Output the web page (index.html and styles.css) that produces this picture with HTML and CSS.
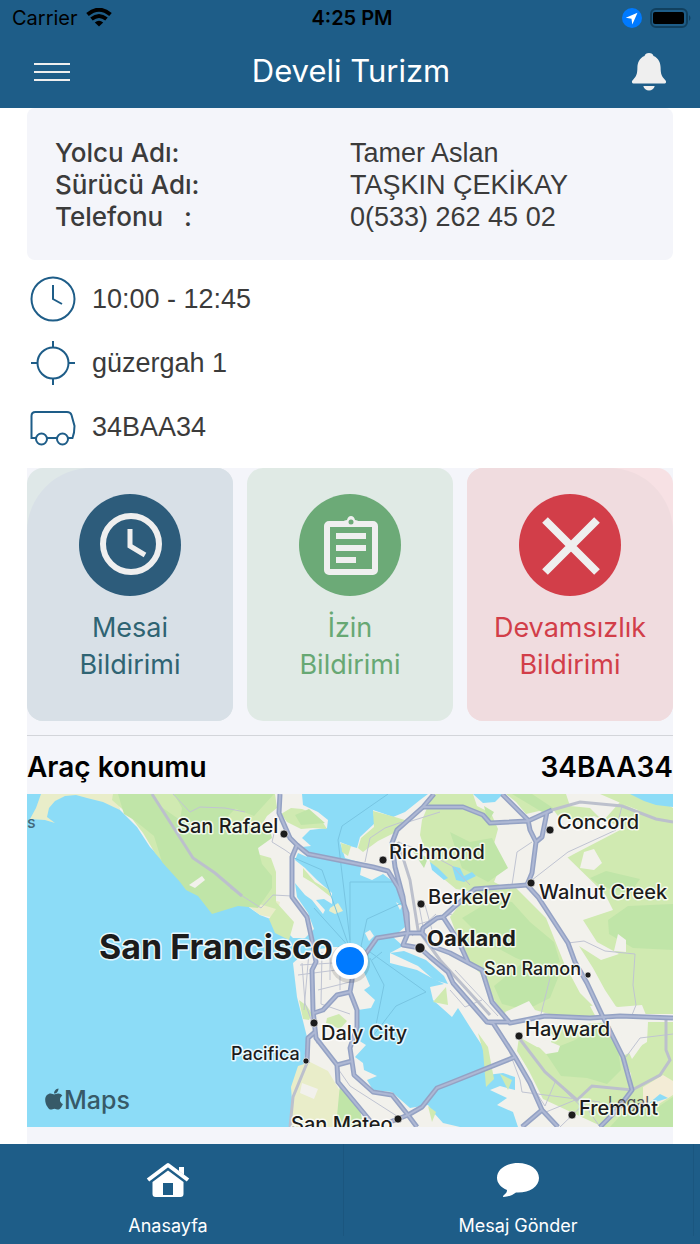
FILE: index.html
```html
<!DOCTYPE html>
<html lang="tr">
<head>
	<meta charset="UTF-8">
	<meta name="viewport" content="width=device-width, initial-scale=1">
	<title>Develi Turizm</title>
	<link rel="stylesheet" href="styles.css">
</head>
<body>
	<header class="top">
		<div class="status-bar">
			<div class="carrier">
				<span>Carrier</span>
				<svg width="26" height="20" viewBox="0 0 26 20">
					<path d="M1.500 6.500Q13-3 24.500 6.500" fill="none" stroke="#000" stroke-width="4"/>
					<path d="M5.500 11Q13 5 20.500 11" fill="none" stroke="#000" stroke-width="4"/>
					<path d="M8.800 14.500Q13 11 17.200 14.500L13 18.500z"/>
				</svg>
			</div>
			<div class="clock">4:25 PM</div>
			<div class="battery">
				<svg width="20" height="20" viewBox="0 0 20 20">
					<circle cx="10" cy="10" r="10" fill="#007aff"/>
					<path d="M15.500 4.800L3.800 9.800l5.700.9.800 5.700z" fill="#fff"/>
				</svg>
				<svg width="42" height="20" viewBox="0 0 42 20">
					<rect x="1" y="1" width="36" height="18" rx="5" fill="none" stroke="#11405f" stroke-width="2"/>
					<rect x="3" y="4" width="31" height="12" rx="2"/>
					<path d="M39 7q3 3 0 6z" fill="#11405f"/>
				</svg>
			</div>
		</div>
		<div class="nav-bar">
			<button type="button" class="icon-button" aria-label="Menü">
				<svg width="38" height="20" viewBox="0 0 38 20">
					<path d="M1 2h36M1 10h36M1 18h36" stroke="#efefef" stroke-width="2"/>
				</svg>
			</button>
			<h1>Develi Turizm</h1>
			<button type="button" class="icon-button" aria-label="Bildirimler">
				<svg width="36" height="40" viewBox="0 0 36 40">
					<path d="M18 1c-2.500 0-4 1.300-4.500 3C8.500 6 6.500 10.500 6.400 15.500 6.300 22 5.500 24 2.500 27.200 1 28.800.800 29.300 1 30.200c.2 1 .9 1.400 2 1.400h30c1.100 0 1.800-.4 2-1.400.2-.9 0-1.400-1.500-3-3-3.200-3.800-5.200-3.900-11.700C29.500 10.500 27.500 6 22.500 4 22 2.300 20.500 1 18 1z" fill="#efefef"/>
					<path d="M12.300 34h11.400c-.7 2.800-3 4.500-5.700 4.500S13 36.800 12.300 34z" fill="#efefef"/>
				</svg>
			</button>
		</div>
	</header>

	<main>
		<dl class="passenger">
			<dt>Yolcu Adı:</dt>
			<dd>Tamer Aslan</dd>
			<dt>Sürücü Adı:</dt>
			<dd>TAŞKIN ÇEKİKAY</dd>
			<dt>Telefonu &nbsp; :</dt>
			<dd>0(533) 262 45 02</dd>
		</dl>

		<ul class="trip">
			<li>
				<svg class="trip-icon" viewBox="0 0 46 46">
					<circle cx="23" cy="23" r="21.500"/>
					<path d="M23 9v14l9 5"/>
				</svg>
				10:00 - 12:45
			</li>
			<li>
				<svg class="trip-icon" viewBox="0 0 46 46">
					<circle cx="23" cy="23" r="15.500"/>
					<path d="M23 1v7M23 38v7M1 23h7M38 23h7"/>
				</svg>
				güzergah 1
			</li>
			<li>
				<svg class="trip-icon" viewBox="0 0 46 46">
					<path d="M6 34H1.500V12q0-4 4-4H37q3.500 0 4.500 3l3 11q0 7-2 12h-4.500M17 34h10"/>
					<circle cx="11.500" cy="35" r="5.500"/>
					<circle cx="32.500" cy="35" r="5.500"/>
				</svg>
				34BAA34
			</li>
		</ul>

		<section class="panel">
			<div class="actions">
				<button type="button" class="action overtime">
					<svg viewBox="0 0 102 102">
						<circle cx="51" cy="51" r="51" fill="#2d5c7b"/>
						<circle cx="52" cy="50" r="28" fill="none" stroke="#efefef" stroke-width="6"/>
						<path d="M51 35v17l15 9" fill="none" stroke="#efefef" stroke-width="5"/>
					</svg>
					<span>Mesai<br>Bildirimi</span>
				</button>
				<button type="button" class="action leave">
					<svg viewBox="0 0 102 102">
						<circle cx="51" cy="51" r="51" fill="#6caa77"/>
						<rect x="28" y="30" width="48" height="48" rx="2" fill="none" stroke="#efefef" stroke-width="6"/>
						<path d="M42 32q1-6 6-6 1-4 4-4t4 4q5 0 6 6z" fill="#efefef"/>
						<circle cx="52" cy="28" r="2.500" fill="#6caa77"/>
						<path d="M37 42h30M37 54h30M37 66h20" stroke="#efefef" stroke-width="6"/>
					</svg>
					<span>İzin<br>Bildirimi</span>
				</button>
				<button type="button" class="action absence">
					<svg viewBox="0 0 102 102">
						<circle cx="51" cy="51" r="51" fill="#d23e49"/>
						<path d="M26 26l52 52M78 26L26 78" stroke="#efefef" stroke-width="8"/>
					</svg>
					<span>Devamsızlık<br>Bildirimi</span>
				</button>
			</div>

			<h2 class="vehicle"><span>Araç konumu</span><span>34BAA34</span></h2>

			<svg class="map" viewBox="27 794 646 333">
				<!-- land -->
				<g class="land">
					<path d="M113 794L120 810 137 827 150 847 163 860 179 875 188 884 195 888 205 880 218 880 230 891 250 908 260 915 273 920 285 930 293 938 305 938 314 929 308 913 297 897 295 883 305 895 312 900 323 914 325 910 316 900 324 899 332 904 332 893 317 880 305 868 295 860 298 853 307 857 302 847 311 846 302 838 310 830 327 828 328 820 318 812 303 805 302 794z"/>
					<path d="M293 963L307 951 333 947 353 947 368 960 364 972 370 986 364 990 375 1000 371 1008 358 1010 358 1040 366 1045 355 1057 363 1063 364 1070 377 1076 367 1080 373 1090 392 1092 410 1108 428 1105 434 1113 443 1123 460 1127 290 1127 293 1100 292 1087 303 1070 307 1037 297 997z"/>
					<path d="M428 794L420 800 405 812 393 817 382 813 373 810 375 823 360 837 357 848 350 846 340 842 345 858 362 863 360 875 372 880 383 874 395 883 402 903 405 927 393 937 403 946 390 953 390 963 417 970 430 977 444 984 430 987 433 1000 452 1017 458 1008 470 1027 483 1047 487 1075 503 1073 515 1077 515 1090 500 1086 490 1090 507 1098 497 1105 513 1112 518 1127 673 1127 673 794z"/>
					<path d="M365 933l5-3 4 6-5 5zM396 902l6 4-2 4z"/>
				</g>
				<!-- beaches -->
				<g class="sand">
					<path d="M41 794L36 808 30 819 45 820 55 823 47 817 49 808 55 801 65 796 76 795 87 798 103 802 120 810 118 800 113 794z"/>
					<path d="M230 889l17 10 16-6 5 5 12 4-4 16-16-3-18-14zM298 1066l12-4 18 9 12 20 3 20-3 16h-50l2-26-1-14z"/>
					<path d="M330 908l8-5 5 8-8 3-6-3z"/>
				</g>
				<!-- parks and hills -->
				<g class="green">
					<path d="M113 794h162l2 14-10 8-6 10-12 10 8 18 14 4 5 14v30l18 20-5 18-14-7-6-14 7-10-20-6-10-6-12 6-8-8-12-6-7-4h-12l-7 2-6-6-15-14-12-14-12-20-13-17-18-16z"/>
					<path d="M302 809l10 4 10 8 5 8-14-1-12 1-14-7-6-8 10-6zM303 868l12 14 14 8 2 7-18-14-10-6zM341 843l10 3-3 10-6-4zM373 811l22 6 13 4-14 12-16 8-15 11-5-4 3-10 13-11zM299 1000l8 6 5 8-3 6-6-1zM327 1018l12-4 8 7-7 8-14-6zM433 1002l13-15 2 18z"/>
					<path d="M433 794h40l4 12 14 7 7 16-6 22 8 16-6 15 10 5-22 6-26-4-22-18-8-18-6-18 2-15z"/>
					<path d="M506 794h60l4 12 20 2 10 10-14 6-28-8-6-8-26 6-10-12zM600 794h50l23 14v10l-30-6-20-8z"/>
					<path d="M564 854l20-12 20-22 16-18 16 8 37 4v200h-52l-16-24-12-22-14-22 22 14 18-6-22-12-14-22 30-10-8-16z"/>
					<path d="M450 917l20-25 46-4 30 30 18 45 16 30 24 24h-60l-40-4-14-18-10-22-14-14z"/>
					<path d="M519 1037l18 10 12 2 4-14-14-7 70-6 14 36 8 28 42-12v53h-70l-60-28-14-28-12-20z"/>
					<path d="M648 1022h25v62l-40 12-2-22-8-18 8-4 16-10z"/>
					<path d="M478 1033l10 14 6 32-8 8-3-36zM500 1074l12 6-4 10zM428 1106l8 6-4 10z"/>
				</g>
				<g class="forest">
					<path d="M118 794h34l8 12 20 14 2-12-8-14h66l-4 14-12 12 14 12 30-10 4 16-14 10 4 16 10 12v12l-14 20-20-2-26 8-14-18-12-6-6-8-18-20-8-26-20-16-10-6z"/>
					<path d="M240 794h34l-20 22-20-8zM295 815l14-6 16 14-24 2zM340 1084l20 26 4 17h-28z"/>
					<path d="M450 832l20 10 22-4 16 30-20 14-26-14zM412 850l16 8-4 10zM484 806l10 6-6 10zM462 918l30-18 20 2 18 20 24 20 6 20-14 8-30-12-30-16zM494 986l32-26 36 8-12 30-24 12-24-6z"/>
					<path d="M608 920l20-14 45-2v46l-40-2-24-14zM590 878l16-7 34 8-10 14-28-6zM545 1052l30-12 22-14 20 16 4 28-14 14-20-6-26-2zM610 1127l24-26 18 10 21-14v30zM512 794h20l24 16-14 2z"/>
				</g>
				<!-- towns -->
				<g class="land">
					<path d="M505 1012l24-11 6 9 14 4-10 12-26 2zM590 1006l14-2 14 3 24-2 4 10-16 10 12 20-10 14-14-30-20-8zM536 1044l10-4 14 6-2 6-12 2zM302 1083l16 6-4 10-14-6zM189 885l6 3 10-8-3-4z"/>
					<path d="M584 852l10-3 8 14-8 7-14-2zM618 934l8 6v12l-12-1zM556 830l22-6 16-8 30 12-50 26-18 10z"/>
				</g>
				<path d="M643 1087l20-12 10 6v14l-22 14-8-6z" fill="#f3ecd6"/>
				<g class="water">
					<path d="M473 794h30l-8 8-12 1zM630 794l14 7 12 4 17 2v-13zM430 862l8 6 10 10-4 2-12-10zM452 866l8 2 4 8 8-4 4 4-12 6-8-2zM390 953l14-2 22 9 18 16 4 8-14-4-16-14zM648 1104l12-10 8 4-12 4z"/>
				</g>
				<!-- ferries -->
				<path class="ferry" d="M388 794L342 826 338 840 350 940M292 857L322 870 352 955M350 958L350 882H392M358 960L367 919 402 903M314 908L352 950M370 958L384 985 376 1025M372 960L382 952M370 952L426 992 396 1006 370 1040"/>
				<!-- secondary roads -->
				<g class="minor">
					<path d="M173 794L190 812 200 807 225 808 245 812M230 888L261 908 273 895 292 896M279 813L272 842 285 850 292 855M365 862L370 838 385 828 402 822M405 823L440 812M398 842L425 852 452 866 470 885"/>
					<path d="M532 880L568 852 616 830 622 806M532 842L517 852 512 885M568 943L584 941 605 951 635 954 633 985 636 1005 632 1015M550 978L540 1018"/>
					<path d="M673 1034L640 1038 626 1057M519 1038L540 1066 570 1096 585 1110M505 1040L520 1080 522 1092 600 1102M515 1060L545 1106 556 1080"/>
					<path d="M300 965L350 962M298 975L352 968M302 963L305 1003 312 1022M309 952L304 1010M318 990L350 982M322 952L321 1004 350 1014M330 950V980M340 950V990M316 1043L345 1030M318 1040L350 1086 400 1118M416 925L452 914M412 936L436 914M418 900L424 932M425 905L432 930M455 970L498 1016M450 990L465 1007 482 1000M560 1127L590 1098M546 1112L580 1098 600 1127"/>
				</g>
				<path class="avenue" d="M152 794L193 858 215 873 242 896M398 842L410 880 418 930 440 960 490 1015M519 1038L545 1072 577 1100 592 1086 632 1090 660 1075 670 1060 666 1050V1018M552 810L580 802 622 806 656 819 673 822M307 1063L293 1097 290 1127"/>
				<!-- highways -->
				<defs>
					<g id="highways">
						<path d="M280 794L279 813 290 838 297 845 292 857 292 897 307 917 312 940 316 962 312 970 313 1010 316 1038 337 1065 338 1082 367 1117 375 1127"/>
						<path d="M297 845L308 854 373 867 388 871 398 887 407 913 408 933M434 794L423 807 405 823 397 830 392 843 395 867 403 897 408 933"/>
						<path d="M423 807H463L483 815 490 823 528 821 552 810M502 794L528 820 530 830 536 842 532 873 527 885 538 897 553 920 568 943 575 962 587 983 603 1017 623 1057 632 1090 617 1110 600 1127M547 812L542 837 536 842"/>
						<path d="M527 885L475 889 453 908 443 917 437 918 423 928 422 933 408 933 377 938 367 952 356 964M408 933L403 945 420 948 430 957 448 972 453 983 487 1022 493 1023 515 1057 530 1083 542 1110 558 1127M422 933L434 947 450 953 482 970 492 1002 510 1023 545 1016 590 1018 620 1016 673 1018M487 1022H510M443 917L458 940 468 962"/>
						<path d="M515 1057L450 1083 437 1088 422 1107 408 1115 390 1122M352 970V980L350 992 357 1010V1027L350 1048 354 1075 373 1092 392 1095 408 1115 417 1127M350 992L337 995 323 1010 314 1013M337 1065L352 1061M315 1032L308 1038 307 1063M542 1110L522 1127"/>
					</g>
				</defs>
				<use href="#highways" class="road-edge"/>
				<use href="#highways" class="road"/>

				<!-- places -->
				<g class="dots">
					<circle cx="284" cy="834" r="4"/>
					<circle cx="383" cy="860" r="4"/>
					<circle cx="550" cy="830" r="4"/>
					<circle cx="531" cy="883" r="4"/>
					<circle cx="421" cy="904" r="4"/>
					<circle cx="420" cy="948" r="5"/>
					<circle cx="588" cy="975" r="3"/>
					<circle cx="314" cy="1023" r="4"/>
					<circle cx="519" cy="1036" r="4"/>
					<circle cx="306" cy="1061" r="3"/>
					<circle cx="398" cy="1119" r="4"/>
					<circle cx="572" cy="1115" r="4"/>
				</g>
				<g class="places">
					<text x="27" y="828" class="sea">s</text>
					<text x="177" y="833">San Rafael</text>
					<text x="389" y="859">Richmond</text>
					<text x="557" y="829">Concord</text>
					<text x="539" y="899">Walnut Creek</text>
					<text x="428" y="904">Berkeley</text>
					<text x="427" y="946" class="city">Oakland</text>
					<text x="484" y="975" class="town">San Ramon</text>
					<text x="321" y="1040">Daly City</text>
					<text x="525" y="1036">Hayward</text>
					<text x="231" y="1060" class="town">Pacifica</text>
					<text x="291" y="1131">San Mateo</text>
					<text x="608" y="1108" class="legal">Legal</text>
					<text x="579" y="1115">Fremont</text>
					<text x="99" y="959" class="capital">San Francisco</text>
				</g>
				<circle cx="350" cy="963" r="20" fill="#000" opacity=".12"/>
				<circle cx="350" cy="961" r="18" fill="#fff"/>
				<circle cx="350" cy="961" r="14" fill="#007aff"/>
				<g fill="#375a68">
					<path transform="translate(45 1087) scale(.047)" d="M318.700 268.700c-.2-36.700 16.400-64.400 50-84.800-18.800-26.900-47.200-41.700-84.700-44.600-35.500-2.800-74.300 20.700-88.500 20.700-15 0-49.400-19.700-76.400-19.700C63.300 141.200 4 184.800 4 273.500q0 39.300 14.400 81.200c12.800 36.700 59 126.700 107.200 125.200 25.200-.6 43-17.900 75.800-17.900 31.800 0 48.300 17.900 76.400 17.900 48.600-.7 90.400-82.500 102.600-119.300-65.200-30.700-61.700-90-61.700-91.900zm-56.600-164.200c27.300-32.400 24.800-61.900 24-72.500-24.100 1.400-52 16.400-67.900 34.900-17.500 19.800-27.800 44.300-25.600 71.900 26.100 2 49.900-11.400 69.500-34.300z"/>
					<text x="64" y="1109" class="brand">Maps</text>
				</g>
			</svg>
		</section>
	</main>

	<nav class="tabs">
		<a href="#home">
			<svg width="44" height="36" viewBox="0 0 44 36">
				<path d="M2 18L22 3l20 15" fill="none" stroke="#fff" stroke-width="4" stroke-linejoin="round"/>
				<path d="M33 5h5v8l-5-4z" fill="#fff"/>
				<path fill-rule="evenodd" d="M22 8.500L37.500 20v12q0 3-3 3H9.500q-3 0-3-3V20zM17 21v12h10V21z" fill="#fff"/>
			</svg>
			Anasayfa
		</a>
		<a href="#message">
			<svg width="44" height="36" viewBox="0 0 44 36">
				<path d="M22 1c12 0 21 6.500 21 15s-9 14.500-21 14.500h-2C16 33.500 12 35 7.500 35c-1-.3-.5-1.200.5-2 2-1.500 3-3 3-5C5 25.500 1 21 1 16 1 7.500 10 1 22 1z" fill="#fff"/>
			</svg>
			Mesaj Gönder
		</a>
	</nav>
</body>
</html>
```
FILE: styles.css
```css
* {
	box-sizing: border-box;
	margin: 0;
	padding: 0;
}

body {
	display: flex;
	flex-direction: column;
	min-height: 100vh;
	background-color: #fff;
	font-family: Inter, "Liberation Sans", sans-serif;
}

button {
	border: none;
	background: none;
	font: inherit;
	cursor: pointer;
}

svg {
	display: block;
}

/* header */
.top {
	background-color: #1e5d88;
}

.status-bar {
	display: grid;
	grid-template-columns: 1fr auto 1fr;
	align-items: center;
	height: 36px;
	padding: 0 8px 0 12px;
	font-size: 20px;
}

.carrier,
.battery {
	display: flex;
	align-items: center;
	gap: 8px;
}

.battery {
	justify-content: flex-end;
}

.clock {
	font-weight: 600;
}

.nav-bar {
	display: flex;
	align-items: center;
	justify-content: space-between;
	height: 72px;
	padding: 0 33px;
}

.nav-bar h1 {
	padding-bottom: 4px;
	color: #fff;
	font-size: 31px;
	font-weight: 400;
}

/* content */
main {
	flex: 1;
	display: flex;
	flex-direction: column;
	padding: 0 27px;
}

.passenger {
	display: grid;
	grid-template-columns: 1fr 1fr;
	padding: 29px 28px 27px;
	border-radius: 8px;
	background-color: #f4f5fa;
	color: #3b3b3b;
	font-size: 26px;
	line-height: 32px;
}

.passenger dt {
	font-weight: 500;
}

.passenger dd,
.trip {
	font-family: "Liberation Sans", Arial, sans-serif;
	font-size: 27px;
}

.trip {
	margin: 7px 0 9px;
	padding-left: 3px;
	list-style: none;
	color: #3b3b3b;
}

.trip li {
	display: flex;
	align-items: center;
	gap: 16px;
	height: 64px;
}

.trip-icon {
	width: 46px;
	height: 46px;
	fill: none;
	stroke: #1e5d88;
	stroke-width: 2;
}

.panel {
	flex: 1;
	padding-bottom: 17px;
	background-color: #f4f5fa;
}

.actions {
	display: grid;
	grid-template-columns: repeat(3, 1fr);
	gap: 14px;
	padding-bottom: 14px;
	border-bottom: 1px solid #d3d5da;
}

.action {
	position: relative;
	display: flex;
	flex-direction: column;
	align-items: center;
	gap: 13px;
	height: 253px;
	padding-top: 26px;
	border-radius: 16px;
	overflow: hidden;
	font-size: 27px;
	line-height: 37px;
}

.action svg,
.action span {
	position: relative;
}

.action svg {
	width: 102px;
	height: 102px;
}

.overtime {
	background-color: #dfe8e8;
	color: #2f6473;
}

.leave {
	background-color: #e0eae5;
	color: #67a873;
}

.absence {
	background-color: #f7e1e4;
	color: #d23e49;
}

/* tinted layer with one big corner */
.overtime::before,
.absence::before {
	content: "";
	position: absolute;
	inset: 0;
}

.overtime::before {
	border-top-left-radius: 64px;
	background-color: #d8e0e7;
}

.absence::before {
	border-top-right-radius: 64px;
	background-color: #f0dcdf;
}

.vehicle {
	display: flex;
	align-items: center;
	justify-content: space-between;
	height: 58px;
	padding-top: 4px;
	font-size: 28px;
	font-weight: 600;
}

/* map */
.map {
	width: 100%;
	height: auto;
	background-color: #8cdcf7;
}

.land {
	fill: #f2f1ec;
}

.sand {
	fill: #e9edc9;
}

.green {
	fill: #d0eab1;
}

.forest {
	fill: #c0e5a8;
}

.water {
	fill: #8cdcf7;
}

.ferry {
	fill: none;
	stroke: #78c5e2;
	stroke-width: 1;
}

.minor {
	fill: none;
	stroke: #c0c4d2;
	stroke-width: 1;
}

.avenue {
	fill: none;
	stroke: #bcc0cc;
	stroke-width: 3;
}

.road-edge,
.road {
	fill: none;
	stroke: #94a2c4;
	stroke-width: 5;
	stroke-linejoin: round;
}

.road {
	stroke: #aeb8d4;
	stroke-width: 2;
}

.dots {
	fill: #1c1c1c;
	stroke: #fff;
	stroke-opacity: .6;
	stroke-width: 1;
}

.places {
	fill: #1c1c1c;
	font-size: 20px;
	font-weight: 500;
}

.places text {
	paint-order: stroke;
	stroke: #fff;
	stroke-opacity: .8;
	stroke-width: 3;
	stroke-linejoin: round;
}

.places .town {
	font-size: 18px;
}

.places .city {
	font-size: 22px;
	font-weight: 700;
}

.places .capital {
	font-size: 34px;
	font-weight: 700;
}

.places .sea {
	fill: #41687a;
	font-size: 16px;
	stroke: none;
}

.places .legal {
	fill: #555;
	font-size: 16px;
	font-weight: 400;
	stroke: none;
}

.brand {
	font-size: 25px;
	font-weight: 500;
}

/* bottom tabs */
.tabs {
	display: grid;
	grid-template-columns: 1fr 1fr;
	height: 100px;
	background-color: #1e5d88;
}

.tabs a {
	position: relative;
	display: flex;
	flex-direction: column;
	align-items: center;
	gap: 16px;
	padding: 18px 14px 0 0;
	color: #fff;
	font-size: 18px;
	line-height: 24px;
	text-decoration: none;
}

.tabs a::after {
	content: "";
	position: absolute;
	top: 0;
	right: 6px;
	bottom: 8px;
	width: 1px;
	background-color: #1b567f;
}
```
